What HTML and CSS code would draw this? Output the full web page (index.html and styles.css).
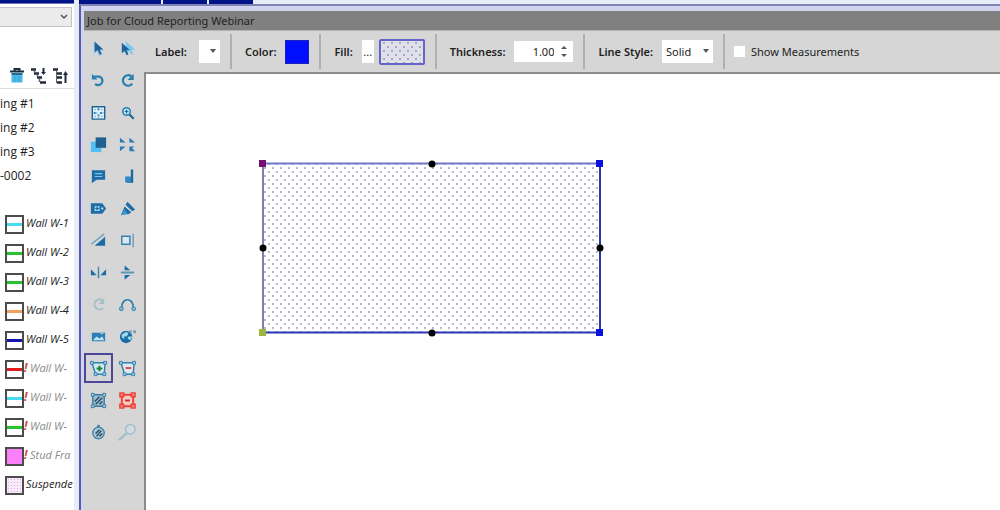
FILE: index.html
```
<!DOCTYPE html>
<html lang="en">
<head>
    <meta charset="UTF-8">
    <meta name="viewport" content="width=device-width, initial-scale=1.0">
    <title>Job for Cloud Reporting Webinar</title>
    <link rel="stylesheet" href="styles.css">
</head>
<body>
    <aside class="sidebar">
        <div class="sidebar-top"></div>
        <div class="job-picker">
            <select class="job-select" aria-label="Job"><option></option></select>
            <svg class="chevron" width="8" height="6" viewBox="0 0 8 6"><path d="M1 1l3 3 3-3" fill="none" stroke="#555" stroke-width="1.5"/></svg>
        </div>
        <div class="tree-actions">
            <button class="tree-btn" aria-label="Delete">
                <svg width="16" height="18" viewBox="0 0 16 18"><path d="M1 4.500h14M5.500 4V2h5v2" fill="none" stroke="#1d2c3c" stroke-width="2"/><path d="M2.500 7h11v8.500h-11z" fill="#4db8e8"/><path d="M2.500 7h11" stroke="#1a6f9c" stroke-width="2"/><path d="M6 9v6M10 9v6" stroke="#38a3d6"/></svg>
            </button>
            <button class="tree-btn" aria-label="Expand all">
                <svg width="16" height="18" viewBox="0 0 16 18"><path d="M0 2.500h5M3 6.500h5M6 10.500h5M9 15.500h6" stroke="#222a3c" stroke-width="2.500"/><path d="M3.500 3v3M6.500 7v3M8.500 11v4" stroke="#566" stroke-width="1.500"/><path d="M12.500 1v5" stroke="#222a3c" stroke-width="2"/><path d="M10 5h5l-2.500 3z" fill="#222a3c"/></svg>
            </button>
            <button class="tree-btn" aria-label="Collapse all">
                <svg width="16" height="18" viewBox="0 0 16 18"><path d="M0 2.500h5M4 6.500h5M4 10.500h5M4 15.500h5" stroke="#222a3c" stroke-width="2.500"/><path d="M3.500 3v13" stroke="#566"/><path d="M12.500 7v9" stroke="#222a3c" stroke-width="2"/><path d="M10 8h5l-2.500-4z" fill="#222a3c"/></svg>
            </button>
        </div>
        <ul class="drawings">
            <li>ing #1</li>
            <li>ing #2</li>
            <li>ing #3</li>
            <li>-0002</li>
        </ul>
        <ul class="takeoffs">
            <li><span class="swatch cyan"></span>Wall W-1</li>
            <li><span class="swatch green"></span>Wall W-2</li>
            <li><span class="swatch green"></span>Wall W-3</li>
            <li><span class="swatch orange"></span>Wall W-4</li>
            <li><span class="swatch navy"></span>Wall W-5</li>
            <li class="pending"><span class="swatch red"></span><b>!</b>Wall W-</li>
            <li class="pending"><span class="swatch cyan"></span><b>!</b>Wall W-</li>
            <li class="pending"><span class="swatch green"></span><b>!</b>Wall W-</li>
            <li class="pending"><span class="swatch magenta"></span><b>!</b>Stud Fra</li>
            <li><span class="swatch dotted"></span>Suspende</li>
        </ul>
    </aside>

    <main class="window">
        <div class="tabs">
            <span class="tab tab-wide"></span>
            <span class="tab"></span>
            <span class="tab"></span>
        </div>
        <div class="frame">
            <h1 class="title">Job for Cloud Reporting Webinar</h1>
            <div class="workspace">
                <div class="tools">
                    <button class="tool" aria-label="Select"><svg viewBox="0 0 20 20"><path d="M5 2v14l3-3 3 5 2.500-1.500-2.500-4.500h5z" fill="#8ccbf2"/><path d="M6 3v11l3-2.500 2.500 5 2-1-2.500-4.500h4z" fill="#1f5f93"/></svg></button>
                    <button class="tool" aria-label="Multi select"><svg viewBox="0 0 20 20"><path d="M8 2l10 9-4 .5 2 4-2 1-2-4-3 3z" fill="#7cc8f2"/><path d="M4 4v11l3-2.500 2 4.500 2-1-2-4.500h3.500z" fill="#1f6398"/></svg></button>
                    <button class="tool" aria-label="Undo"><svg viewBox="0 0 20 20"><path d="M5 6h6a4.500 4.500 0 1 1-4.500 7.500" fill="none" stroke="#2d7eb2" stroke-width="2.400"/><path d="M3 3v6h6z" fill="#2d7eb2"/></svg></button>
                    <button class="tool" aria-label="Redo"><svg viewBox="0 0 20 20"><path d="M14 5.500a5.500 5.500 0 1 0 1 8" fill="none" stroke="#2d7eb2" stroke-width="2.400"/><path d="M16.500 3v6.500H10z" fill="#2d7eb2"/></svg></button>
                    <button class="tool" aria-label="Fit to window"><svg viewBox="0 0 20 20"><path d="M3.500 4h13v13h-13z" fill="#dff3ff" stroke="#1d628f" stroke-width="1.500"/><path d="M10 5.500v3M10 12v3.500M5 10.500h3.500M11.500 10.500H15" stroke="#2d7eb2" stroke-width="2" stroke-dasharray="2 1"/><path d="M6 7h1M13 7h1M6 14h1M13 14h1" stroke="#1d628f"/></svg></button>
                    <button class="tool" aria-label="Zoom in"><svg viewBox="0 0 20 20"><circle cx="9" cy="9" r="4" fill="#b9e2f7" stroke="#2d7eb2" stroke-width="1.600"/><path d="M12 12l4.500 4.500" stroke="#1d628f" stroke-width="2.200"/><path d="M7 9h4M9 7v4" stroke="#1d628f"/></svg></button>
                    <button class="tool" aria-label="Bring to front"><svg viewBox="0 0 20 20"><path d="M2 7h11v11H2z" fill="#53bff7"/><path d="M7 2.500h11v11H7z" fill="#1c6190"/></svg></button>
                    <button class="tool" aria-label="Expand view"><svg viewBox="0 0 20 20"><path d="M2 3l6 5H2zM12 3l6 5h-6zM2 12h6l-6 5zM12 12h5l-2 2 3 3h-6z" fill="#287cae"/></svg></button>
                    <button class="tool" aria-label="Comment"><svg viewBox="0 0 20 20"><path d="M3 3.500h14v10H8L3 17z" fill="#1c6da6"/><path d="M6 7h8M6 10h8" stroke="#78c6ef" stroke-width="1.300"/></svg></button>
                    <button class="tool" aria-label="Drop point"><svg viewBox="0 0 20 20"><path d="M13.500 2.500h2.500v14H9v-5h4.500z" fill="#1d699c"/><path d="M7.500 10h6v6h-6z" fill="#2d8ac4"/></svg></button>
                    <button class="tool" aria-label="Tag"><svg viewBox="0 0 20 20"><path d="M2 4.500h12l4 5.500-4 5.500H2z" fill="#1c6da6"/><path d="M6 7.500h5v5H6zM13 9h2v2h-2z" fill="#cbe9f8"/><path d="M8.500 8v4M6.500 10h4" stroke="#1c6da6" stroke-width="1.500"/></svg></button>
                    <button class="tool" aria-label="Highlight"><svg viewBox="0 0 20 20"><path d="M10 3l8 8-3 2-7-7zM7 8l7 6-3 2-5-1-3 2z" fill="#1c6da6"/><path d="M3 17l4-7 3 6z" fill="#3897cf"/></svg></button>
                    <button class="tool" aria-label="Slope"><svg viewBox="0 0 20 20"><path d="M2.500 14L16 3" stroke="#6da3c0" stroke-width="1.500"/><path d="M6 15.500L17 6v9.500z" fill="#1c6da6"/></svg></button>
                    <button class="tool" aria-label="Align edge"><svg viewBox="0 0 20 20"><path d="M4 5.500h8.500v8.500H4z" fill="#dbe8f0" stroke="#3680ae" stroke-width="1.500"/><path d="M16 3v14" stroke="#6c9dbc" stroke-width="1.500"/></svg></button>
                    <button class="tool" aria-label="Flip horizontal"><svg viewBox="0 0 20 20"><path d="M10 4v12" stroke="#4384aa" stroke-width="1.500"/><path d="M2 6.500l6 6.500H2zM18 6.500L12 13h6z" fill="#1c6da6"/></svg></button>
                    <button class="tool" aria-label="Flip vertical"><svg viewBox="0 0 20 20"><path d="M3 10h14" stroke="#5b94b5" stroke-width="2"/><path d="M7 2.500l6 5H7zM7 17.500l6-5H7z" fill="#1c6da6"/></svg></button>
                    <button class="tool" aria-label="Rotate" disabled><svg viewBox="0 0 20 20"><path d="M14 5.500a5.300 5.300 0 1 0 1 8" fill="none" stroke="#a3bfc9" stroke-width="2"/><path d="M16 3.500v6h-6z" fill="#a3bfc9"/></svg></button>
                    <button class="tool" aria-label="Arc"><svg viewBox="0 0 20 20"><path d="M4 14C3 2 17 2 16 14" fill="none" stroke="#2d7eb2" stroke-width="1.800"/><circle cx="3.500" cy="14.500" r="2" fill="#8dbbd4" stroke="#2d7eb2"/><circle cx="16.500" cy="14.500" r="2" fill="#8dbbd4" stroke="#2d7eb2"/></svg></button>
                    <button class="tool" aria-label="Image"><svg viewBox="0 0 20 20"><path d="M3 6h14v9H3z" fill="#2b80b4"/><path d="M4 14l4-4 3 2 3-2 2 4z" fill="#bfe2f4"/><path d="M12 7h3" stroke="#bfe2f4"/></svg></button>
                    <button class="tool" aria-label="Web link"><svg viewBox="0 0 20 20"><circle cx="8.500" cy="10.500" r="6.500" fill="#1c6da6"/><path d="M9 5l2 2-2 3-3 0 1 3-3-2V8zM11 10l4 0-2 4-3-2z" fill="#a5d8f0"/><path d="M12 5h2.500M16 5h3" stroke="#7f9fb0" stroke-width="3"/></svg></button>
                    <button class="tool selected" aria-label="Add to shape"><svg viewBox="0 0 20 20"><path d="M3 4h14l-1 12H7z" fill="#d3e8ee" stroke="#2d7eb2" stroke-width="1.500"/><path d="M1.500 2.500h3v3h-3zM15.500 2.500h3v3h-3zM5.500 14.500h3v3h-3zM14.500 14.500h3v3h-3z" fill="#a5d5ed" stroke="#2d7eb2"/><path d="M8 10h6M11 7v6" stroke="#17803c" stroke-width="2"/></svg></button>
                    <button class="tool" aria-label="Subtract from shape"><svg viewBox="0 0 20 20"><path d="M3 4h14l-1 12H7z" fill="#dce8ed" stroke="#2d7eb2" stroke-width="1.500"/><path d="M1.500 2.500h3v3h-3zM15.500 2.500h3v3h-3zM5.500 14.500h3v3h-3zM14.500 14.500h3v3h-3z" fill="#a5d5ed" stroke="#2d7eb2"/><path d="M8 9.500h6" stroke="#e0483e" stroke-width="2"/></svg></button>
                    <button class="tool" aria-label="Hatch shape"><svg viewBox="0 0 20 20"><path d="M4 4h12v12H4z" fill="#9fc0d0" stroke="#3c789d" stroke-width="1.500"/><path d="M6 11l5-5M7 14l7-7M11 14l3-3" stroke="#214c68" stroke-width="1.500"/><path d="M2.500 2.500h3v3h-3zM14.500 2.500h3v3h-3zM2.500 14.500h3v3h-3zM14.500 14.500h3v3h-3z" fill="#a5d5ed" stroke="#3c789d"/></svg></button>
                    <button class="tool" aria-label="Remove shape"><svg viewBox="0 0 20 20"><path d="M4 4h12v12H4z" fill="#f3cbc7" stroke="#ef4036" stroke-width="2"/><path d="M2 2h4v4H2zM14 2h4v4h-4zM2 14h4v4H2zM14 14h4v4h-4z" fill="#f6837c" stroke="#ef4036" stroke-width="1.500"/><path d="M7.500 10h5" stroke="#d8261c" stroke-width="2"/></svg></button>
                    <button class="tool" aria-label="Hatch circle"><svg viewBox="0 0 20 20"><circle cx="10" cy="10.500" r="6" fill="#a9c9d8" stroke="#4b84a5" stroke-width="1.500"/><path d="M7 11l4-4M8 14l5-6M11 14l3-3" stroke="#234c66" stroke-width="1.500"/><path d="M8.500 2h3v3h-3z" fill="#4b84a5"/></svg></button>
                    <button class="tool" aria-label="Search" disabled><svg viewBox="0 0 20 20"><circle cx="13" cy="6.500" r="5" fill="#d3dde1" stroke="#9ebfca" stroke-width="1.600"/><path d="M9.500 10.500L1 18" stroke="#9ebfca" stroke-width="2.500"/></svg></button>
                </div>
                <div class="editor">
                    <div class="options">
                        <div class="group">
                            <label class="caption" for="label">Label:</label>
                            <span class="dropdown dropdown-small"><select id="label"><option></option></select></span>
                        </div>
                        <div class="group">
                            <label class="caption" for="color">Color:</label>
                            <button id="color" class="color"></button>
                        </div>
                        <div class="group">
                            <label class="caption" for="fill">Fill:</label>
                            <span class="fill">
                                <button id="fill" class="more">...</button>
                                <button class="pattern" aria-label="Fill pattern">
                                    <svg width="42" height="22"><rect width="42" height="22" fill="url(#dots)"/></svg>
                                </button>
                            </span>
                        </div>
                        <div class="group">
                            <label class="caption" for="thickness">Thickness:</label>
                            <span class="spinner">
                                <input id="thickness" type="text" inputmode="decimal" value="1.00">
                                <span class="steps">
                                    <button class="step up" aria-label="Increase"></button>
                                    <button class="step down" aria-label="Decrease"></button>
                                </span>
                            </span>
                        </div>
                        <div class="group">
                            <label class="caption" for="style">Line Style:</label>
                            <span class="dropdown"><select id="style"><option>Solid</option></select></span>
                        </div>
                        <div class="group">
                            <label class="check"><input type="checkbox">Show Measurements</label>
                        </div>
                    </div>
                    <div class="canvas">
                        <svg class="drawing" width="600" height="400">
                            <defs>
                                <pattern id="dots" width="8" height="8" patternUnits="userSpaceOnUse">
                                    <circle cx="3" cy="2" r="0.800" fill="#5c6288"/>
                                    <circle cx="7" cy="6" r="0.800" fill="#5c6288"/>
                                </pattern>
                            </defs>
                            <rect x="117" y="89" width="337" height="169" fill="url(#dots)"/>
                            <path d="M117 89.500h337" stroke="#7176c8" stroke-width="2"/>
                            <path d="M117 89v169" stroke="#7f80ad" stroke-width="2"/>
                            <path d="M117 258.500h337V89" fill="none" stroke="#2a36b4" stroke-width="2"/>
                            <rect x="113" y="86" width="7" height="7" fill="#741272"/>
                            <rect x="450" y="86" width="7" height="7" fill="#0a10e0"/>
                            <rect x="450" y="255" width="7" height="7" fill="#0a10e0"/>
                            <rect x="113" y="255" width="7" height="7" fill="#9db83c"/>
                            <circle cx="286" cy="90" r="3.500"/>
                            <circle cx="286" cy="259" r="3.500"/>
                            <circle cx="117" cy="174" r="3.500"/>
                            <circle cx="454" cy="174" r="3.500"/>
                        </svg>
                    </div>
                </div>
            </div>
        </div>
    </main>
</body>
</html>
```
FILE: styles.css
```
* {
    box-sizing: border-box;
}

body {
    margin: 0;
    height: 100vh;
    display: flex;
    overflow: hidden;
    background: #e6edf8;
    color: #222;
    font-family: "Noto Sans", "Open Sans", sans-serif;
    font-size: 11px;
    line-height: 16px;
}

button,
select,
input {
    margin: 0;
    padding: 0;
    border: none;
    border-radius: 0;
    background: none;
    color: inherit;
    font: inherit;
}

ul {
    margin: 0;
    padding: 0;
    list-style: none;
}

/* Left panel */
.sidebar {
    flex: none;
    width: 74px;
    overflow: hidden;
    background: #fff;
    white-space: nowrap;
}

.sidebar-top {
    height: 4px;
    background: #001488;
    border-bottom: 1px solid #6a76b4;
}

.job-picker {
    position: relative;
    padding: 3px 2px 0 0;
}

.job-select {
    display: block;
    width: 100%;
    height: 20px;
    appearance: none;
    background: #ebebeb;
    border: 1px solid #c4c4c4;
    border-left: none;
}

.chevron {
    position: absolute;
    right: 6px;
    top: 10px;
}

.tree-actions {
    display: flex;
    gap: 6px;
    height: 62px;
    padding: 40px 0 0 9px;
    border-bottom: 1px solid #d8dce4;
}

.tree-btn {
    width: 16px;
    height: 18px;
}

.tree-btn svg {
    display: block;
}

.drawings {
    padding-top: 3px;
    font-family: "Open Sans", "Noto Sans", sans-serif;
    font-size: 12px;
}

.drawings li {
    height: 24px;
    line-height: 24px;
}

.takeoffs {
    padding-top: 22px;
    font-family: "Open Sans", "Noto Sans", sans-serif;
    font-style: italic;
}

.takeoffs li {
    display: flex;
    height: 29px;
    padding-left: 5px;
    gap: 2px;
    line-height: 26px;
}

.takeoffs b {
    width: 4px;
    margin-left: -2px;
    color: #cc4a4a;
    font-size: 12px;
}

.takeoffs .pending {
    color: #8a8a8a;
}

.swatch {
    flex: none;
    width: 19px;
    height: 19px;
    margin-top: 5px;
    border: 2px solid #4c4c4c;
    background: linear-gradient(currentColor, currentColor) center / 100% 3px no-repeat;
}

.cyan { color: #48dcf0; }
.green { color: #28c430; }
.orange { color: #f0a060; }
.navy { color: #1414b0; }
.red { color: #e01c1c; }
.magenta { background: #fb80fb; }
.dotted { background: radial-gradient(#dcaee4 1px, #f8ecfa 1px) 0 0 / 3px 3px; }

/* Main window */
.window {
    flex: 1;
    display: flex;
    flex-direction: column;
    min-width: 0;
    padding-left: 5px;
}

.tabs {
    flex: none;
    display: flex;
    gap: 2px;
    height: 4px;
}

.tab {
    width: 44px;
    background: #001488;
}

.tab-wide {
    width: 82px;
}

.frame {
    flex: 1;
    display: flex;
    flex-direction: column;
    min-height: 0;
    padding: 5px 0 0 3px;
    border-top: 2px solid #7f86b6;
    border-left: 2px solid #565ba6;
    background: #d2d4ef;
}

.title {
    flex: none;
    height: 20px;
    margin: 0;
    padding-left: 3px;
    border-bottom: 1px solid #b4b4b4;
    background: #808080;
    font-size: 11px;
    font-weight: 400;
    line-height: 20px;
}

.workspace {
    flex: 1;
    display: flex;
    min-height: 0;
    background: #d6d6d6;
}

.tools {
    flex: none;
    display: grid;
    grid-template-columns: 29px 29px;
    grid-auto-rows: 32px;
    align-content: start;
    padding-right: 2px;
    padding-top: 1px;
}

.tool {
    display: flex;
    align-items: center;
    justify-content: center;
    margin: 1px 0;
}

.tool svg {
    width: 19px;
    height: 19px;
}

.selected {
    border: 2px solid #4c4798;
}

.editor {
    flex: 1;
    display: flex;
    flex-direction: column;
    min-width: 0;
}

.options {
    flex: none;
    display: flex;
    align-items: center;
    height: 41px;
    white-space: nowrap;
}

.group {
    display: flex;
    align-items: center;
    gap: 9px;
    height: 35px;
    padding: 0 10px 0 13px;
    border-right: 2px solid #b0b0b0;
}

.group:first-child {
    padding-left: 11px;
}

.group:last-child {
    padding-left: 9px;
    border-right: none;
}

.caption {
    font-weight: 600;
}

.dropdown {
    position: relative;
    display: flex;
    width: 51px;
}

.dropdown::after {
    content: "";
    position: absolute;
    right: 4px;
    top: 9px;
    border: 3px solid transparent;
    border-top: 4px solid #555;
    pointer-events: none;
}

.dropdown select {
    width: 100%;
    height: 23px;
    padding-left: 4px;
    appearance: none;
    background: #fff;
}

.dropdown-small {
    width: 21px;
    margin-left: 3px;
}

.color {
    width: 24px;
    height: 24px;
    border: 1px solid #2020b8;
    background: #0010ff;
}

.fill {
    display: flex;
    align-items: center;
    gap: 5px;
}

.more {
    width: 12px;
    height: 23px;
    background: #fff;
}

.pattern {
    width: 46px;
    height: 26px;
    border: 2px solid #6464c8;
    border-radius: 2px;
    background: #dfe0ea;
}

.pattern svg {
    display: block;
}

.spinner {
    display: flex;
    width: 59px;
    height: 21px;
    background: #fff;
}

.spinner input {
    flex: 1;
    min-width: 0;
    padding-right: 7px;
    text-align: right;
}

.steps {
    display: flex;
    flex-direction: column;
    justify-content: center;
    gap: 5px;
    width: 12px;
}

.step {
    width: 0;
    height: 0;
    border: 3px solid transparent;
}

.up {
    border-top: none;
    border-bottom-color: #555;
}

.down {
    border-bottom: none;
    border-top-color: #555;
}

.check {
    display: flex;
    align-items: center;
    gap: 6px;
}

.check input {
    width: 11px;
    height: 11px;
    appearance: none;
    background: #fff;
}

.check input:checked {
    background: #0010ff;
}

.canvas {
    flex: 1;
    min-height: 0;
    overflow: hidden;
    border-top: 2px solid #8c8c8c;
    border-left: 2px solid #8c8c8c;
    background: #fff;
}

.drawing {
    display: block;
}
```
